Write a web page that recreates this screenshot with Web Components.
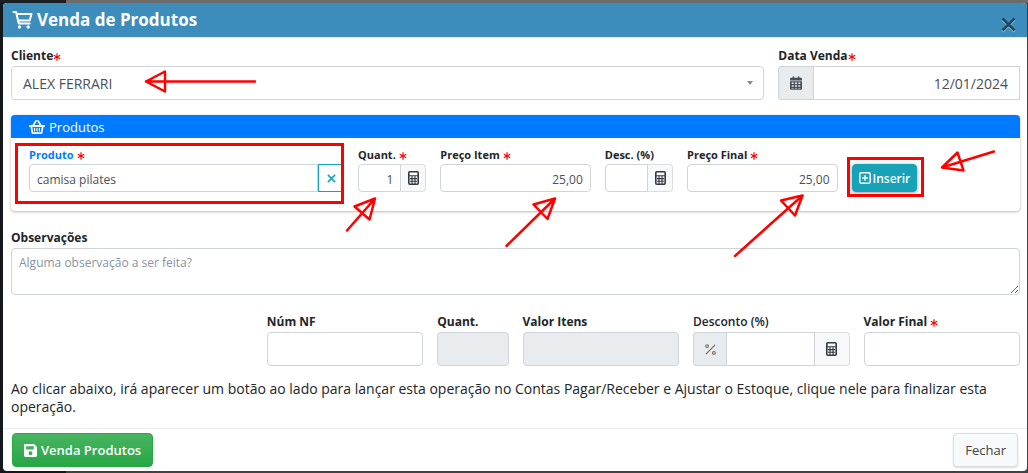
<!DOCTYPE html>
<html lang="pt-br">
<head>
<meta charset="utf-8">
<meta name="viewport" content="width=device-width, initial-scale=1">
<title>Venda de Produtos</title>
<style>
html{height:100%;background:linear-gradient(90deg,#14181b 66px,#404143 66px)}
body{
  margin:0;
  font-family:"Open Sans","Noto Sans",sans-serif;
  font-size:14px;
  color:#212529;
  border-top:3px solid #6c6c6c;
  border-image:linear-gradient(90deg,#1c1f22 66px,#6c6c6c 66px) 3 0 0 0;
}
</style>
</head>
<body>
<venda-modal heading="Venda de Produtos">
  <linha-campos>
    <campo-select style="--span:9" label="Cliente" value="ALEX FERRARI" required></campo-select>
    <campo-texto style="--span:3" label="Data Venda" value="12/01/2024" before="calendar" align="right" required tight square></campo-texto>
  </linha-campos>

  <cartao-produtos heading="Produtos">
    <campo-texto style="--span:4" label="Produto" value="camisa pilates" clear required small active></campo-texto>
    <campo-texto style="--span:1" label="Quant." value="1" after="calculator" align="right" required small></campo-texto>
    <campo-texto style="--span:2" label="Preço Item" value="25,00" align="right" required small></campo-texto>
    <campo-texto style="--span:1" label="Desc. (%)" after="calculator" small></campo-texto>
    <campo-texto style="--span:2" label="Preço Final" value="25,00" align="right" required small></campo-texto>
    <botao-acao kind="info" icon="plus">Inserir</botao-acao>
  </cartao-produtos>

  <campo-area label="Observações" placeholder="Alguma observação a ser feita?"></campo-area>

  <linha-campos>
    <campo-texto style="--start:4;--span:2" label="Núm NF"></campo-texto>
    <campo-texto style="--span:1" label="Quant." disabled></campo-texto>
    <campo-texto style="--span:2" label="Valor Itens" disabled></campo-texto>
    <campo-texto style="--span:2" label="Desconto (%)" before="percent" after="calculator" light></campo-texto>
    <campo-texto style="--span:2" label="Valor Final" required></campo-texto>
  </linha-campos>

  <span slot="note">Ao clicar abaixo, irá aparecer um botão ao lado para lançar esta operação no Contas Pagar/Receber e Ajustar o Estoque, clique nele para finalizar esta operação.</span>
  <botao-acao slot="footer" kind="success" icon="save">Venda Produtos</botao-acao>
  <botao-acao slot="footer" kind="light">Fechar</botao-acao>
</venda-modal>
<marcas-guia></marcas-guia>

<script>
const ICONS = {
  cart: ['0 0 20 18', '<g fill="none" stroke="currentColor" stroke-width="2" stroke-linejoin="round" stroke-linecap="round"><path d="M1 1h2.6l2.6 11.5h11M4.2 3H19l-1.8 6.5H5.6"/></g><circle cx="7" cy="16" r="1.7" fill="currentColor"/><circle cx="15.7" cy="16" r="1.7" fill="currentColor"/>'],
  basket: ['0 0 16 14', '<g fill="none" stroke="currentColor" stroke-width="1.8" stroke-linecap="round" stroke-linejoin="round"><path d="M.9 6h14.2M4 5.8 7 .9M12 5.8 9 .9M2.3 6.4l1.2 6.7h9l1.2-6.7"/><path stroke-width="1.2" d="M5.6 8.3v2.6M8 8.3v2.6M10.4 8.3v2.6"/></g>'],
  calendar: ['0 0 448 512', '<path fill="currentColor" d="M128 0c18 0 32 14 32 32v32h128V32c0-18 14-32 32-32s32 14 32 32v32h48c27 0 48 21 48 48v48H0v-48c0-27 21-48 48-48h48V32c0-18 14-32 32-32zM0 192h448v272c0 27-21 48-48 48H48c-27 0-48-21-48-48V192zm64 48v56h72v-56H64zm120 0v56h80v-56h-80zm128 0v56h72v-56h-72zM64 344v56h72v-56H64zm120 0v56h80v-56h-80zm128 0v56h72v-56h-72zM64 440v24h72v-24H64zm120 0v24h80v-24h-80zm128 0v24h72v-24h-72z"/>'],
  calculator: ['0 0 11 14', '<rect x=".8" y=".8" width="9.4" height="12.4" rx="1" fill="none" stroke="currentColor" stroke-width="1.6"/><path d="M1 4.8h9M2 7.6h7M2 10.3h7M4 5v8M7 5v8" stroke="currentColor" stroke-width="1.1"/>'],
  percent: ['0 0 12 12', '<g fill="none" stroke="currentColor" stroke-width="1.2"><path d="M11 1 1 11"/><circle cx="2.3" cy="2.3" r="1.5"/><circle cx="9.7" cy="9.7" r="1.5"/></g>'],
  plus: ['0 0 12 12', '<rect x=".8" y=".8" width="10.4" height="10.4" rx="1.4" fill="none" stroke="currentColor" stroke-width="1.5"/><path d="M6 3.2v5.6M3.2 6h5.6" stroke="currentColor" stroke-width="1.5"/>'],
  save: ['0 0 12 12', '<path fill="currentColor" fill-rule="evenodd" d="M1.3 0h8L12 2.7v8c0 .7-.6 1.3-1.3 1.3H1.3C.6 12 0 11.4 0 10.7V1.3C0 .6.6 0 1.3 0zM2 2v3h7V2zm4 4.8a1.8 1.8 0 1 0 0 3.6 1.8 1.8 0 0 0 0-3.6z"/>'],
  times: ['0 0 10 10', '<path d="m1 1 8 8M9 1 1 9" fill="none" stroke="currentColor" stroke-width="1.7"/>'],
  asterisk: ['0 0 8 8', '<path d="M4 .3v7.4M.8 2.2l6.4 3.6M7.2 2.2.8 5.8" stroke="currentColor" stroke-width="1.2"/>']
};

function icon(name, cls = '') {
  const [box, body] = ICONS[name];
  return `<svg class="icon ${cls}" viewBox="${box}" aria-hidden="true">${body}</svg>`;
}

const FIELD_CSS = `
*,*::before,*::after{box-sizing:border-box}
:host{
  display:block;
  min-width:0;
  grid-column:var(--start,auto) / span var(--span,12);
}
label{
  display:flex;
  align-items:center;
  gap:3px;
  height:16px;
  margin-bottom:2px;
  font-size:12px;
  line-height:16px;
  font-weight:700;
  white-space:nowrap;
}
.star{width:8px;height:8px;color:#f00;margin-top:2px}
.icon{display:block;flex:none}
input,select,textarea{
  display:block;
  width:100%;
  min-width:0;
  margin:0;
  border:1px solid #ced4da;
  border-radius:4px;
  background:#fff;
  color:#495057;
  font:inherit;
  outline:0;
}
`;

class VendaModal extends HTMLElement {
  connectedCallback() {
    this.attachShadow({ mode: 'open' }).innerHTML = `
      <style>
*,*::before,*::after{box-sizing:border-box}
:host{
  display:block;
  margin:0 1px 1px 3px;
  background:#fff;
  border-radius:4px;
  overflow:hidden;
}
header{
  display:flex;
  align-items:center;
  gap:4px;
  height:35px;
  padding:0 11px 0 9px;
  background:#3c8dbc;
  border-bottom:1px solid #e9ecef;
  color:#fff;
}
h1{flex:1;margin:0;font-size:17px;line-height:24px;font-weight:700}
.cart{width:21px;height:18px}
.close{
  padding:0;
  margin-top:8px;
  border:0;
  background:none;
  color:#1e465e;
}
.close svg{display:block;width:15px;height:15px;filter:drop-shadow(0 1px 0 #9cc6dd)}
.body{padding:10px 7px 12px 8px}
.note{margin:14px 0 0;font-size:14px;line-height:18px;font-weight:500}
footer{
  display:flex;
  justify-content:space-between;
  padding:4px 9px;
  border-top:1px solid #e9ecef;
}
      </style>
      <section role="dialog" aria-labelledby="title">
        <header>${icon('cart', 'cart')}<h1 id="title">${this.getAttribute('heading')}</h1>
          <button class="close" type="button" aria-label="Fechar">${icon('times')}</button>
        </header>
        <div class="body"><slot></slot><p class="note"><slot name="note"></slot></p></div>
        <footer><slot name="footer"></slot></footer>
      </section>
    `;
  }
}

class LinhaCampos extends HTMLElement {
  connectedCallback() {
    this.attachShadow({ mode: 'open' }).innerHTML = `
      <style>
:host{
  display:grid;
  grid-template-columns:repeat(12,minmax(0,1fr));
  column-gap:14px;
}
      </style>
      <slot></slot>
    `;
  }
}

class CartaoProdutos extends HTMLElement {
  connectedCallback() {
    this.attachShadow({ mode: 'open' }).innerHTML = `
      <style>
:host{
  display:block;
  margin:15px 0 19px;
  border-radius:4px;
  box-shadow:0 0 1px rgba(0,0,0,.2),0 1px 3px rgba(0,0,0,.25);
}
h2{
  display:flex;
  align-items:center;
  gap:4px;
  height:23px;
  margin:0;
  padding:0 18px;
  border-radius:4px 4px 0 0;
  background:#007bff;
  color:#fff;
  font-size:13px;
  font-weight:400;
}
h2 svg{width:16px;height:14px}
.fields{
  display:grid;
  grid-template-columns:repeat(12,minmax(0,1fr));
  align-items:end;
  column-gap:14px;
  padding:9px 18px 19px;
}
      </style>
      <h2>${icon('basket')}${this.getAttribute('heading')}</h2>
      <div class="fields"><slot></slot></div>
    `;
  }
}

class CampoTexto extends HTMLElement {
  connectedCallback() {
    const get = (name) => this.getAttribute(name) || '';
    const before = get('before');
    const after = get('after');
    this.attachShadow({ mode: 'open' }).innerHTML = `
      <style>${FIELD_CSS}
.group{display:flex;height:34px}
input{flex:1;width:0;padding:0 11px;text-align:${get('align') || 'left'}}
input:disabled{background:#e9ecef}
.addon,button{
  display:flex;
  align-items:center;
  justify-content:center;
  flex:none;
  width:35px;
  padding:0;
  border:1px solid #ced4da;
  background:#e9ecef;
  color:#495057;
}
.addon{border-right:0;border-radius:4px 0 0 4px}
button{border-left:0;border-radius:0 4px 4px 0;background:#f8f9fa;border-color:#ddd;color:#343a40}
.addon + input{border-top-left-radius:0;border-bottom-left-radius:0}
input:not(:last-child){border-top-right-radius:0;border-bottom-right-radius:0}
.calendar{width:12px;height:14px}
.calculator{width:11px;height:14px}
.percent{width:11px;height:11px;color:#75675a}
:host([tight]) label{gap:0}
:host([square]) input{border-radius:0}
:host([light]) label{font-weight:600}
:host([light]) .addon{width:33px}
:host([active]) label{color:#007bff}
:host([small]) label{font-size:11px;margin-bottom:1px}
:host([small]) .group{height:28px}
:host([small]) input{padding:2px 7px 0;font-size:12px}
:host([small]) button{width:25px}
:host([small]) .clear{width:26px;border:1px solid #17a2b8;border-radius:0;background:#fff;color:#17a2b8}
.clear svg{width:9px;height:9px}
      </style>
      <label for="campo">${get('label')}${this.hasAttribute('required') ? icon('asterisk', 'star') : ''}</label>
      <div class="group">
        ${before ? `<span class="addon">${icon(before, before)}</span>` : ''}
        <input id="campo" type="text" value="${get('value')}" ${this.hasAttribute('disabled') ? 'disabled' : ''}>
        ${after ? `<button type="button" aria-label="Calcular">${icon(after, after)}</button>` : ''}
        ${this.hasAttribute('clear') ? `<button class="clear" type="button" aria-label="Limpar">${icon('times')}</button>` : ''}
      </div>
    `;
  }
}

class CampoSelect extends HTMLElement {
  connectedCallback() {
    this.attachShadow({ mode: 'open' }).innerHTML = `
      <style>${FIELD_CSS}
label{gap:0}
.wrap{display:grid;align-items:center}
.wrap > *{grid-area:1 / 1}
select{height:34px;padding:0 11px;appearance:none}
.caret{
  justify-self:end;
  margin-right:11px;
  border:3px solid transparent;
  border-top:4px solid #888;
  border-bottom:0;
  pointer-events:none;
}
      </style>
      <label for="campo">${this.getAttribute('label')}${icon('asterisk', 'star')}</label>
      <div class="wrap">
        <select id="campo"><option>${this.getAttribute('value')}</option></select>
        <span class="caret"></span>
      </div>
    `;
  }
}

class CampoArea extends HTMLElement {
  connectedCallback() {
    this.attachShadow({ mode: 'open' }).innerHTML = `
      <style>${FIELD_CSS}
:host{margin-bottom:19px}
textarea{height:47px;padding:5px 7px;font-size:12px;line-height:18px;resize:vertical}
textarea::placeholder{color:#8b939b}
      </style>
      <label for="campo">${this.getAttribute('label')}</label>
      <textarea id="campo" placeholder="${this.getAttribute('placeholder')}"></textarea>
    `;
  }
}

class BotaoAcao extends HTMLElement {
  connectedCallback() {
    const name = this.getAttribute('icon');
    this.attachShadow({ mode: 'open' }).innerHTML = `
      <style>
:host{display:block}
button{
  display:flex;
  align-items:center;
  gap:4px;
  height:34px;
  padding:0 11px;
  border:1px solid #ddd;
  border-radius:4px;
  background:#f8f9fa;
  color:#444;
  font:inherit;
  font-size:13px;
  white-space:nowrap;
  box-shadow:0 1px 2px rgba(0,0,0,.15);
}
svg{width:12px;height:12px}
:host([kind=success]) button{
  border-color:#28a745;
  background:linear-gradient(#48b461,#28a745);
  color:#fff;
  font-weight:600;
  box-shadow:none;
}
:host([kind=success]) svg{width:13px;height:13px}
:host([kind=info]){grid-column:span 2}
:host([kind=info]) button{
  height:28px;
  padding:0 6px;
  gap:2px;
  border-color:#17a2b8;
  background:#17a2b8;
  color:#fff;
  font-weight:600;
  font-size:12px;
  box-shadow:0 1px 4px rgba(0,0,0,.4);
}
      </style>
      <button type="button">${name ? icon(name) : ''}<slot></slot></button>
    `;
  }
}

// Red frames and arrows drawn over the form
class MarcasGuia extends HTMLElement {
  connectedCallback() {
    const arrows = MarcasGuia.ARROWS.map(([tail, tip, a, b]) =>
      `<path d="M${tail}L${tip}L${a}L${b}L${tip}"/>`).join('');
    this.attachShadow({ mode: 'open' }).innerHTML = `
      <style>
:host{position:absolute;top:0;left:0;pointer-events:none}
svg{display:block}
      </style>
      <svg width="1028" height="473" fill="none" stroke="#f00" stroke-linejoin="round" stroke-linecap="round" aria-hidden="true">
        <g stroke-width="3" stroke-linejoin="miter"><rect x="16.5" y="144.5" width="326" height="58"/><rect x="848.5" y="158.5" width="74" height="37"/></g>
        <g stroke-width="2.5">${arrows}</g>
      </svg>
    `;
  }
}

MarcasGuia.ARROWS = [
  ['255 81.5', '146 81.5', '165 71.5', '165 91.5'],
  ['347 230.5', '375 198.5', '354.5 206.5', '369.5 219.5'],
  ['506.5 246', '555 198.5', '533.5 204.5', '547.5 219'],
  ['735 256', '802.5 195.5', '781 200.5', '795 215.5'],
  ['994 151.5', '942 167.5', '957.5 152.5', '963.5 170.5']
];

customElements.define('venda-modal', VendaModal);
customElements.define('linha-campos', LinhaCampos);
customElements.define('cartao-produtos', CartaoProdutos);
customElements.define('campo-texto', CampoTexto);
customElements.define('campo-select', CampoSelect);
customElements.define('campo-area', CampoArea);
customElements.define('botao-acao', BotaoAcao);
customElements.define('marcas-guia', MarcasGuia);
</script>
</body>
</html>
